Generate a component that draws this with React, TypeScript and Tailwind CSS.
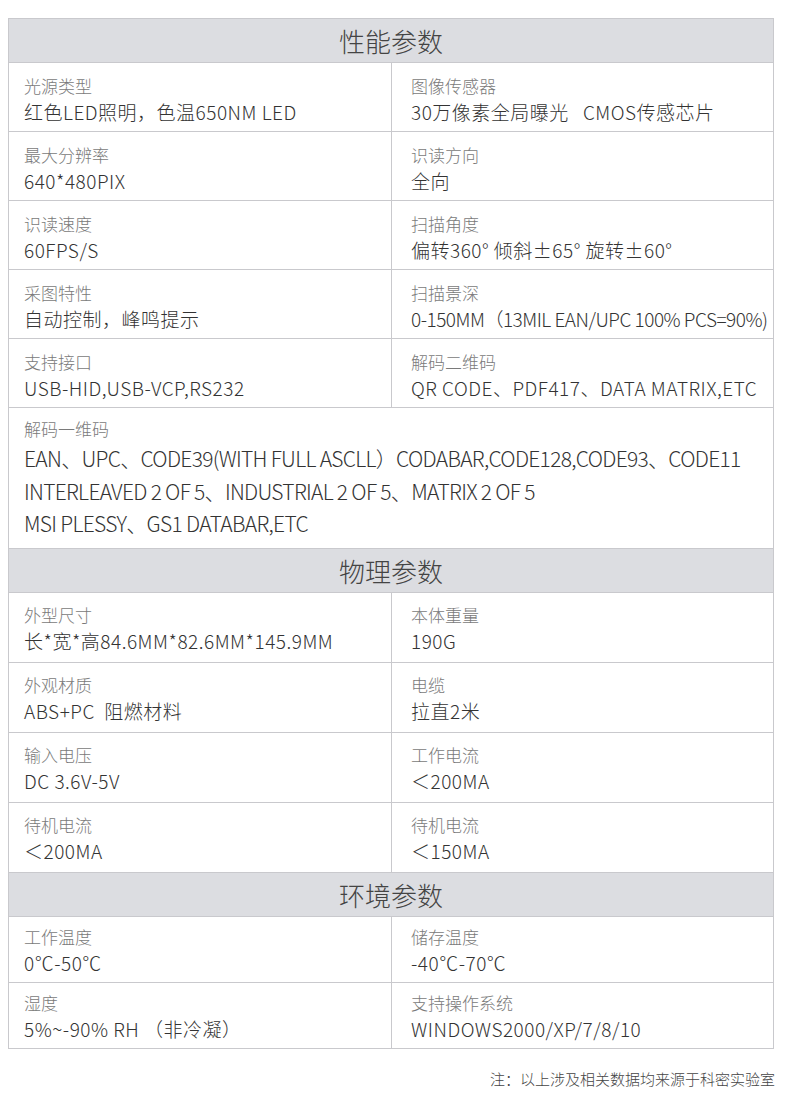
import React, { FC } from "react";

type Cell = { label: string; value: string; tight?: boolean };

const perf: [Cell, Cell][] = [
  [
    { label: "光源类型", value: "红色LED照明，色温650NM LED" },
    { label: "图像传感器", value: "30万像素全局曝光   CMOS传感芯片" },
  ],
  [
    { label: "最大分辨率", value: "640*480PIX" },
    { label: "识读方向", value: "全向" },
  ],
  [
    { label: "识读速度", value: "60FPS/S" },
    { label: "扫描角度", value: "偏转360° 倾斜±65° 旋转±60°" },
  ],
  [
    { label: "采图特性", value: "自动控制，峰鸣提示" },
    { label: "扫描景深", value: "0-150MM（13MIL EAN/UPC 100% PCS=90%)", tight: true },
  ],
  [
    { label: "支持接口", value: "USB-HID,USB-VCP,RS232" },
    { label: "解码二维码", value: "QR CODE、PDF417、DATA MATRIX,ETC" },
  ],
];

const phys: [Cell, Cell][] = [
  [
    { label: "外型尺寸", value: "长*宽*高84.6MM*82.6MM*145.9MM" },
    { label: "本体重量", value: "190G" },
  ],
  [
    { label: "外观材质", value: "ABS+PC  阻燃材料" },
    { label: "电缆", value: "拉直2米" },
  ],
  [
    { label: "输入电压", value: "DC 3.6V-5V" },
    { label: "工作电流", value: "＜200MA" },
  ],
  [
    { label: "待机电流", value: "＜200MA" },
    { label: "待机电流", value: "＜150MA" },
  ],
];

const env: [Cell, Cell][] = [
  [
    { label: "工作温度", value: "0℃-50℃" },
    { label: "储存温度", value: "-40℃-70℃" },
  ],
  [
    { label: "湿度", value: "5%~-90% RH （非冷凝）" },
    { label: "支持操作系统", value: "WINDOWS2000/XP/7/8/10" },
  ],
];

const SectionHead: FC<{ title: string }> = ({ title }) => (
  <div className="h-[44px] bg-[#dcdde1] border-b border-[#c9c9cd] flex items-center justify-center text-[26px] text-[#444] font-light leading-none">
    {title}
  </div>
);

const SpecCell: FC<{ cell: Cell; right?: boolean; pt: string }> = ({ cell, right, pt }) => (
  <div
    className={
      right
        ? `flex-1 pl-[19px] ${pt} whitespace-pre`
        : `w-[383px] shrink-0 pl-[15px] ${pt} border-r border-[#c9c9cd] whitespace-pre`
    }
  >
    <p className="text-[17px] leading-[20px] text-[#7a7a7a] font-light">{cell.label}</p>
    <p
      className={
        cell.tight
          ? "mt-[3px] text-[19px] leading-[26px] text-[#333] font-light tracking-[-0.5px]"
          : "mt-[3px] text-[19px] leading-[26px] text-[#333] font-light tracking-[0.5px]"
      }
    >
      {cell.value}
    </p>
  </div>
);

const Rows: FC<{ rows: [Cell, Cell][]; h: string; pt: string }> = ({ rows, h, pt }) => (
  <>
    {rows.map((r, i) => (
      <div key={i} className={`${h} flex border-b border-[#c9c9cd]`}>
        <SpecCell cell={r[0]} pt={pt} />
        <SpecCell cell={r[1]} right pt={pt} />
      </div>
    ))}
  </>
);

const App: FC = () => {
  return (
    <div
      className="w-[790px] h-[1105px] bg-white pt-[18px]"
      style={{ fontFamily: '"Noto Sans CJK SC", "Noto Sans", sans-serif' }}
    >
      <div className="ml-[8px] w-[766px] border-l border-r border-t border-[#c9c9cd]">
        <SectionHead title="性能参数" />
        <Rows rows={perf} h="h-[69px]" pt="pt-[13px]" />
        {/* 一维码 full width row */}
        <div className="h-[141px] pl-[15px] pt-[10px] border-b border-[#c9c9cd]">
          <p className="text-[17px] leading-[22px] text-[#7a7a7a] font-light">解码一维码</p>
          <div className="mt-[2px] text-[21px] leading-[32.5px] text-[#333] font-light tracking-[-0.7px]">
            <p>EAN、UPC、CODE39(WITH FULL ASCLL）CODABAR,CODE128,CODE93、CODE11</p>
            <p>INTERLEAVED 2 OF 5、INDUSTRIAL 2 OF 5、MATRIX 2 OF 5</p>
            <p>MSI PLESSY、GS1 DATABAR,ETC</p>
          </div>
        </div>
        <SectionHead title="物理参数" />
        <Rows rows={phys} h="h-[70px]" pt="pt-[12px]" />
        <SectionHead title="环境参数" />
        <Rows rows={env} h="h-[66px]" pt="pt-[10px]" />
      </div>
      <p className="mt-[19px] pr-[15px] text-right text-[15px] text-[#444] font-light">
        注：以上涉及相关数据均来源于科密实验室
      </p>
    </div>
  );
};

export default App;
